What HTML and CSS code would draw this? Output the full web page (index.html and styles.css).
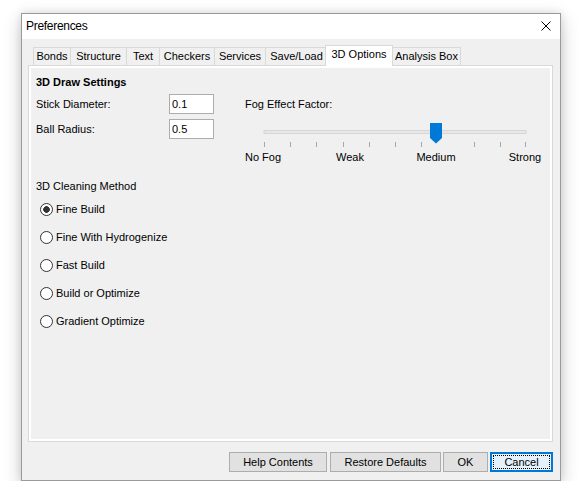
FILE: index.html
```html
<!DOCTYPE html>
<html>
<head>
<meta charset="utf-8">
<title>Preferences</title>
<link rel="stylesheet" href="styles.css">
</head>
<body>
<div class="window">
  <div class="titlebar">
    <span class="title">Preferences</span>
    <svg class="close" width="10" height="10" viewBox="0 0 10 10"><path d="M0.5 0.5 L9.5 9.5 M9.5 0.5 L0.5 9.5" stroke="#000" stroke-width="1" fill="none"/></svg>
  </div>
  <div class="tabs">
    <div class="tab tab-bonds">Bonds</div>
    <div class="tab tab-structure">Structure</div>
    <div class="tab tab-text">Text</div>
    <div class="tab tab-checkers">Checkers</div>
    <div class="tab tab-services">Services</div>
    <div class="tab tab-save">Save/Load</div>
    <div class="tab tab-3d selected">3D Options</div>
    <div class="tab tab-analysis">Analysis Box</div>
  </div>
  <div class="panel">
    <div class="page">
      <div class="group-title">3D Draw Settings</div>
      <div class="draw">
        <div class="fields">
          <div class="field"><span class="label">Stick Diameter:</span><span class="input">0.1</span></div>
          <div class="field"><span class="label">Ball Radius:</span><span class="input">0.5</span></div>
        </div>
        <div class="fog">
          <div class="fog-label">Fog Effect Factor:</div>
          <svg class="slider" width="300" height="51" viewBox="0 0 300 51">
            <rect x="19" y="16.5" width="262" height="3" fill="#e7e7e7" stroke="#d6d6d6" stroke-width="1"/>
            <g stroke="#a8a8a8" stroke-width="1">
              <line x1="19.5" y1="28" x2="19.5" y2="33"/>
              <line x1="45.5" y1="28" x2="45.5" y2="33"/>
              <line x1="71.5" y1="28" x2="71.5" y2="33"/>
              <line x1="98.5" y1="28" x2="98.5" y2="33"/>
              <line x1="124.5" y1="28" x2="124.5" y2="33"/>
              <line x1="150.5" y1="28" x2="150.5" y2="33"/>
              <line x1="176.5" y1="28" x2="176.5" y2="33"/>
              <line x1="229.5" y1="28" x2="229.5" y2="33"/>
              <line x1="255.5" y1="28" x2="255.5" y2="33"/>
              <line x1="280.5" y1="28" x2="280.5" y2="33"/>
            </g>
            <polygon points="185,9 197,9 197,24 191,29.5 185,24" fill="#0078d7"/>
            <g class="slider-text">
              <text x="18" y="47" text-anchor="middle">No Fog</text>
              <text x="105" y="47" text-anchor="middle">Weak</text>
              <text x="191" y="47" text-anchor="middle">Medium</text>
              <text x="280" y="47" text-anchor="middle">Strong</text>
            </g>
          </svg>
        </div>
      </div>
      <div class="method-title">3D Cleaning Method</div>
      <div class="radios">
        <div class="radio-row"><span class="radio checked"></span><span class="radio-label">Fine Build</span></div>
        <div class="radio-row"><span class="radio"></span><span class="radio-label">Fine With Hydrogenize</span></div>
        <div class="radio-row"><span class="radio"></span><span class="radio-label">Fast Build</span></div>
        <div class="radio-row"><span class="radio"></span><span class="radio-label">Build or Optimize</span></div>
        <div class="radio-row"><span class="radio"></span><span class="radio-label">Gradient Optimize</span></div>
      </div>
    </div>
  </div>
  <div class="buttons">
    <div class="btn btn-help">Help Contents</div>
    <div class="btn btn-restore">Restore Defaults</div>
    <div class="btn btn-ok">OK</div>
    <div class="btn btn-cancel default"><span class="focus">Cancel</span></div>
  </div>
</div>
</body>
</html>
```
FILE: styles.css
```css
html, body {
  margin: 0;
  padding: 0;
  background: #ffffff;
}
body {
  padding: 13px 0 0 21px;
  font-family: "Liberation Sans", Arial, sans-serif;
  font-size: 11px;
  color: #000;
}
.window {
  width: 540px;
  height: 468px;
  box-sizing: border-box;
  border: 1px solid #9a9a9a;
  background: #f0f0f0;
  box-shadow: 0 6px 18px rgba(0, 0, 0, 0.2), 0 0 8px rgba(0, 0, 0, 0.1);
  display: flex;
  flex-direction: column;
}
.titlebar {
  height: 25px;
  background: #ffffff;
  display: flex;
  align-items: center;
  justify-content: space-between;
  padding: 0 9px 2px 4px;
  box-sizing: border-box;
}
.title {
  font-size: 12px;
  letter-spacing: -0.3px;
  line-height: 16px;
}
.close {
  display: block;
}
.tabs {
  margin-top: 6px;
  height: 20px;
  display: flex;
  align-items: flex-end;
  padding-left: 11px;
}
.tab {
  box-sizing: border-box;
  height: 18px;
  border: 1px solid #d9d9d9;
  border-bottom: none;
  background: #f0f0f0;
  line-height: 17px;
  text-align: center;
  white-space: nowrap;
  margin-left: -1px;
  position: relative;
}
.tab-bonds { width: 38px; margin-left: 0; }
.tab-structure { width: 57px; }
.tab-text { width: 34px; }
.tab-checkers { width: 56px; }
.tab-services { width: 52px; }
.tab-save { width: 63px; }
.tab-3d { width: 68px; margin-left: -3px; }
.tab-analysis { width: 69px; }
.tab.selected {
  height: 21px;
  margin-bottom: -1px;
  background: #ffffff;
  z-index: 2;
  padding-bottom: 3px;
}
.panel {
  box-sizing: border-box;
  margin: 0 7px 0 6px;
  height: 377px;
  border: 1px solid #d9d9d9;
  background: #ffffff;
  padding: 2px;
  position: relative;
  z-index: 1;
}
.page {
  height: 100%;
  background: #f0f0f0;
  box-sizing: border-box;
  padding: 6px 0 0 5px;
}
.group-title {
  font-weight: bold;
  line-height: 16px;
}
.draw {
  margin-top: 4px;
  display: flex;
  align-items: flex-start;
}
.fields {
  width: 209px;
  display: flex;
  flex-direction: column;
  gap: 5px;
}
.field {
  height: 20px;
  display: flex;
  align-items: center;
}
.label {
  width: 133px;
}
.input {
  box-sizing: border-box;
  width: 45px;
  height: 20px;
  border: 1px solid #adadad;
  background: #ffffff;
  padding-left: 2px;
  line-height: 18px;
}
.fog {
  display: flex;
  flex-direction: column;
}
.fog-label {
  line-height: 20px;
}
.slider {
  display: block;
}
.slider-text {
  font-family: "Liberation Sans", Arial, sans-serif;
  font-size: 11px;
  fill: #000;
}
.method-title {
  margin-top: 13px;
  line-height: 16px;
}
.radios {
  margin: 1px 0 0 4px;
  display: flex;
  flex-direction: column;
}
.radio-row {
  height: 28px;
  display: flex;
  align-items: center;
}
.radio {
  box-sizing: border-box;
  width: 13px;
  height: 13px;
  border: 1px solid #333333;
  border-radius: 50%;
  background: #ffffff;
}
.radio.checked {
  background: radial-gradient(circle, #333333 0, #333333 3px, #ffffff 3.6px);
}
.radio-label {
  margin-left: 3px;
}
.buttons {
  margin-top: 10px;
  display: flex;
  justify-content: flex-end;
  padding-right: 7px;
}
.btn {
  box-sizing: border-box;
  height: 20px;
  border: 1px solid #adadad;
  background: #e1e1e1;
  display: flex;
  align-items: center;
  justify-content: center;
  margin-left: 2px;
}
.btn-help { width: 98px; margin-left: 0; }
.btn-restore { width: 111px; margin-left: 3px; }
.btn-ok { width: 45px; }
.btn-cancel { width: 63px; }
.btn.default {
  border-color: #0078d7;
  background: #e5f1fb;
  box-shadow: inset 0 0 0 1px #0078d7;
  padding: 2px;
}
.focus {
  box-sizing: border-box;
  width: 100%;
  height: 100%;
  border: 1px dotted #000;
  display: flex;
  align-items: center;
  justify-content: center;
}
```
